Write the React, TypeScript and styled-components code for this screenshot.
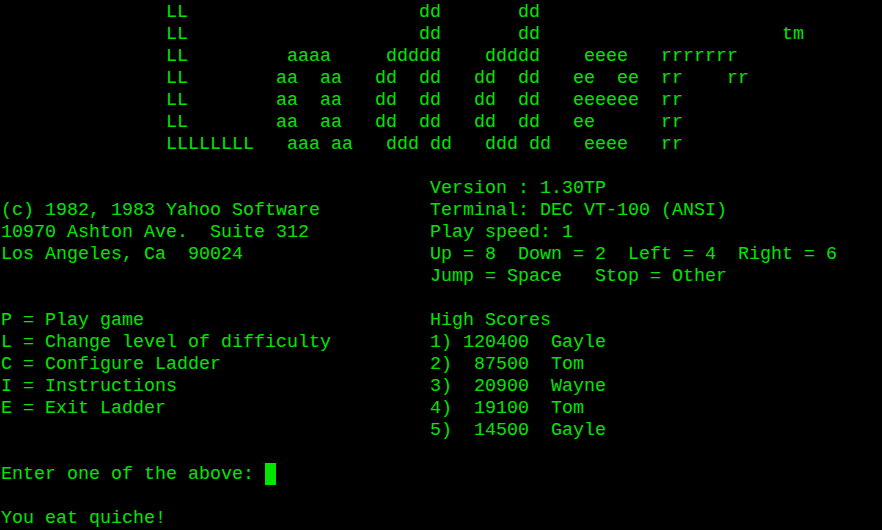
import React from 'react';
import styled, { createGlobalStyle } from 'styled-components';

const SCREEN_LINES = [
  '               LL                     dd       dd',
  '               LL                     dd       dd                      tm',
  '               LL         aaaa     ddddd    ddddd    eeee   rrrrrrr',
  '               LL        aa  aa   dd  dd   dd  dd   ee  ee  rr    rr',
  '               LL        aa  aa   dd  dd   dd  dd   eeeeee  rr',
  '               LL        aa  aa   dd  dd   dd  dd   ee      rr',
  '               LLLLLLLL   aaa aa   ddd dd   ddd dd   eeee   rr',
  '',
  '                                       Version : 1.30TP',
  '(c) 1982, 1983 Yahoo Software          Terminal: DEC VT-100 (ANSI)',
  '10970 Ashton Ave.  Suite 312           Play speed: 1',
  'Los Angeles, Ca  90024                 Up = 8  Down = 2  Left = 4  Right = 6',
  '                                       Jump = Space   Stop = Other',
  '',
  'P = Play game                          High Scores',
  'L = Change level of difficulty         1) 120400  Gayle',
  'C = Configure Ladder                   2)  87500  Tom',
  'I = Instructions                       3)  20900  Wayne',
  'E = Exit Ladder                        4)  19100  Tom',
  '                                       5)  14500  Gayle',
  '',
];

const GlobalStyle = createGlobalStyle`
  html,
  body {
    margin: 0;
    height: 100%;
    background: #000;
  }
`;

const Terminal = styled.div`
  width: 882px;
  height: 530px;
  overflow: hidden;
  padding: 1px 0 0 1px;
  box-sizing: border-box;
  background: #000;
  color: #00e600;
  font-family: 'Liberation Mono', monospace;
  font-size: 18.33px;
  line-height: 24px;
`;

const Line = styled.div`
  height: 22px;
  white-space: pre;
`;

const Cursor = styled.span`
  display: inline-block;
  width: 11px;
  height: 22px;
  vertical-align: top;
  background: #00e600;
`;

export default function App() {
  return (
    <>
      <GlobalStyle />
      <Terminal>
        {SCREEN_LINES.map((line, i) => (
          <Line key={i}>{line}</Line>
        ))}
        <Line>
          Enter one of the above: <Cursor />
        </Line>
        <Line />
        <Line>You eat quiche!</Line>
      </Terminal>
    </>
  );
}
